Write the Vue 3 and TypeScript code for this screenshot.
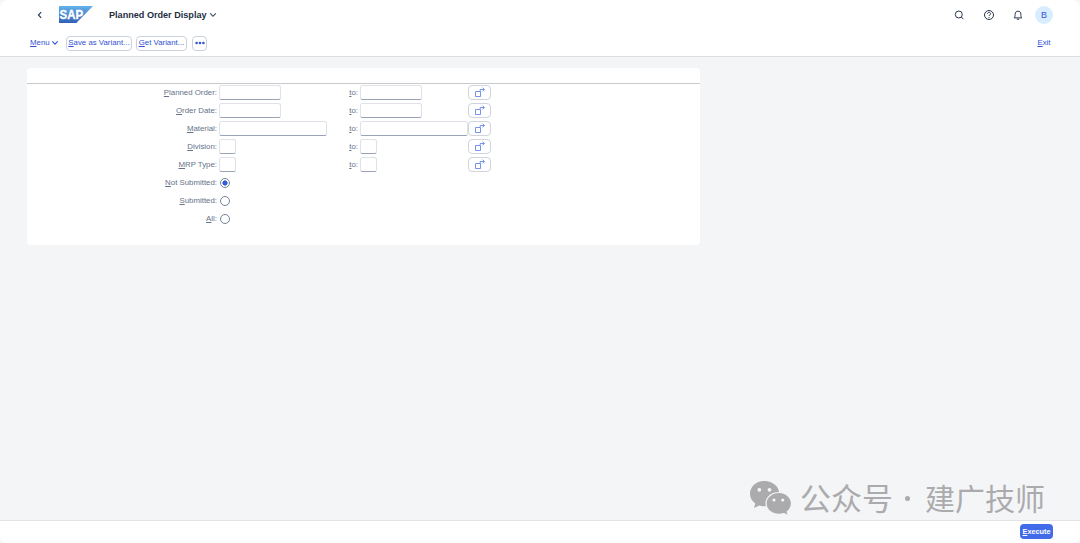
<script setup lang="ts">
interface RangeRow {
  label: string
  width: number
}

const rows: RangeRow[] = [
  { label: 'Planned Order:', width: 62 },
  { label: 'Order Date:', width: 62 },
  { label: 'Material:', width: 107.5 },
  { label: 'Division:', width: 17 },
  { label: 'MRP Type:', width: 17 },
]

const options = [
  { label: 'Not Submitted:', checked: true },
  { label: 'Submitted:', checked: false },
  { label: 'All:', checked: false },
]
</script>

<template>
  <div class="app">
    <header>
      <div class="shell">
        <svg class="back" viewBox="0 0 8 10"><path d="M5.2 2.1 2.4 5l2.8 2.9" /></svg>
        <svg class="logo" viewBox="0 0 34 17">
          <defs>
            <linearGradient id="logoFill" x1="0" y1="0" x2="0" y2="1">
              <stop offset="0" stop-color="#62b2ea" />
              <stop offset="1" stop-color="#3160b4" />
            </linearGradient>
          </defs>
          <path d="M0 0H34L17.3 17H0Z" fill="url(#logoFill)" />
          <text x="0.6" y="12.9" textLength="23.5" lengthAdjust="spacingAndGlyphs">SAP</text>
        </svg>
        <h1>Planned Order Display</h1>
        <svg class="chev title-chev" viewBox="0 0 8 6"><path d="m1.2 1.4 2.8 2.9 2.8-2.9" /></svg>
        <div class="tools">
          <svg viewBox="0 0 12 12"><circle cx="5.8" cy="5.5" r="3.5" /><path d="m8.3 8 2.1 2.2" /></svg>
          <svg viewBox="0 0 12 12">
            <circle cx="6" cy="6" r="4.5" />
            <path d="M4.5 4.8C4.5 2.8 7.6 2.8 7.6 4.8 7.6 5.9 6 5.9 6 7" /><path d="M6 8.1v1" />
          </svg>
          <svg viewBox="0 0 12 12">
            <path d="M2.2 8.9c1-1 .9-1.8.9-3.5 0-2 1.1-3.2 2.9-3.2s2.9 1.2 2.9 3.2c0 1.7-.1 2.5.9 3.5Z" /><path d="M4.8 10.2h2.4" />
          </svg>
          <span class="avatar">B</span>
        </div>
      </div>
      <div class="toolbar">
        <span class="menu"><u>M</u>enu</span>
        <svg class="chev menu-chev" viewBox="0 0 8 6"><path d="m1.3 1.3 2.7 2.8 2.7-2.8" /></svg>
        <button class="save"><span><u>S</u>ave as Variant...</span></button>
        <button class="get"><span><u>G</u>et Variant...</span></button>
        <button class="more"><svg viewBox="0 0 10 4"><circle cx="1.6" cy="2" r="1.3" /><circle cx="5" cy="2" r="1.3" /><circle cx="8.4" cy="2" r="1.3" /></svg></button>
        <span class="exit"><u>E</u>xit</span>
      </div>
    </header>

    <main>
      <section class="panel">
        <div class="panel-head"></div>
        <div class="form">
          <div v-for="row in rows" :key="row.label" class="row">
            <label><u>{{ row.label[0] }}</u>{{ row.label.slice(1) }}</label>
            <div class="cell"><span class="field" :style="{ width: row.width + 'px' }"></span></div>
            <label><u>t</u>o:</label>
            <div class="cell"><span class="field" :style="{ width: row.width + 'px' }"></span></div>
            <button class="multi">
              <svg viewBox="0 0 10 10"><path d="M.5 4.5h5v5h-5Z" /><path d="M5.2 4V2.500h4M7.500.6 9.400 2.500 7.500 4.400" /></svg>
            </button>
          </div>
          <div v-for="option in options" :key="option.label" class="row">
            <label><u>{{ option.label[0] }}</u>{{ option.label.slice(1) }}</label>
            <div class="cell"><span class="radio" :class="{ checked: option.checked }"></span></div>
          </div>
        </div>
      </section>
      <div class="watermark">
        <svg viewBox="0 0 44 36">
          <path d="M15.5 1C7.2 1 1 6.7 1 13.8c0 4.2 2 7.4 5.3 9.7L5 28l5.2-2.6c1.8.6 3.4.8 6.3.8C24.5 26.2 30.3 20.7 30.3 13.7 30.3 6.7 23.8 1 15.5 1Z" />
          <path class="front" d="M30 12.5c-7.3 0-13 4.8-13 11 0 6.1 5.6 10.9 13 10.9 1.8 0 3.5-.3 5-.8l4.5 2.1-1.3-4c2.7-2 4.3-4.8 4.3-8.2 0-6.2-5.6-11-12.5-11Z" />
          <g class="eyes"><circle cx="10.3" cy="9.8" r="1.9" /><circle cx="20.5" cy="9.8" r="1.9" /><circle cx="25" cy="20" r="1.6" /><circle cx="33.7" cy="20" r="1.6" /></g>
        </svg>
        <span class="account">公众号</span><span class="dot"></span><span class="name">建广技师</span>
      </div>
    </main>
    <footer><button class="execute"><span><u>E</u>xecute</span></button></footer>
  </div>
</template>

<style>
body {
  background: #f4f5f7;
}
</style>

<style scoped>
* {
  box-sizing: border-box;
}
.app {
  height: 543px;
  display: flex;
  flex-direction: column;
  background: #f4f5f7;
  font: 7.85px/10px "Liberation Sans", Arial, sans-serif;
  color: #65728a;
  overflow: hidden;
}
header {
  height: 57px;
  flex: none;
  background: #fff;
  border-bottom: 1px solid #dcdee1;
  border-radius: 8px 8px 0 0;
}
svg {
  fill: none;
  flex: none;
}
u {
  text-decoration-thickness: 0.7px;
  text-underline-offset: 1px;
}
button {
  font: inherit;
  padding: 0;
  flex: none;
  display: flex;
  align-items: center;
  justify-content: center;
  white-space: nowrap;
}
.shell {
  height: 30px;
  display: flex;
  align-items: center;
  padding: 0 27px 0 36px;
}
.back {
  width: 8px;
  height: 10px;
  stroke: #26384d;
  stroke-width: 1.1;
}
.logo {
  width: 34px;
  height: 17px;
  margin: -1px 0 0 15px;
}
.logo text {
  fill: #fff;
  stroke: #fff;
  stroke-width: 0.4px;
  font: bold 13.5px "Liberation Sans", Arial, sans-serif;
}
h1 {
  margin: 0 0 0 16px;
  color: #1d2d3e;
  font-size: 9.1px;
  line-height: 12px;
  white-space: nowrap;
}
.chev {
  width: 8px;
  height: 6px;
  stroke: #33465c;
  stroke-width: 1.1;
}
.title-chev {
  margin-left: 2.5px;
}
.tools {
  margin-left: auto;
  display: flex;
  align-items: center;
}
.tools svg {
  width: 12px;
  height: 12px;
  margin-right: 17.4px;
  stroke: #26374a;
  stroke-width: 1;
}
.tools svg:nth-child(3) {
  margin-right: 11px;
}
.avatar {
  width: 18px;
  height: 18px;
  border-radius: 50%;
  background: #d8edff;
  color: #3656d4;
  font-size: 9px;
  line-height: 18px;
  text-align: center;
}
.toolbar {
  height: 26px;
  display: flex;
  align-items: center;
  padding: 0 29.5px 0 30px;
  color: #3353d4;
}
.menu {
  width: 21px;
}
.menu-chev {
  stroke: #3353d4;
  margin-right: 7px;
}
.toolbar button {
  height: 15px;
  border: 1px solid #ccd2dc;
  border-radius: 4px;
  background: #fff;
  color: inherit;
}
.save {
  width: 66px;
}
.get {
  width: 51px;
  margin-left: 4px;
}
.more {
  width: 15px;
  margin-left: 5px;
}
.more svg {
  width: 10px;
  height: 4px;
  fill: #3353d4;
}
.exit {
  margin-left: auto;
}
main {
  flex: 1;
  min-height: 0;
  position: relative;
  padding: 11px 27px 0;
}
.panel {
  width: 672.5px;
  height: 176.5px;
  background: #fff;
  border-radius: 4px;
}
.panel-head {
  height: 16px;
  border-bottom: 1px solid #c9cacc;
}
.row {
  height: 18px;
  display: grid;
  grid-template-columns: 190px 107.5px 33.5px 107.5px 23px;
  align-items: center;
}
.row label {
  text-align: right;
  white-space: nowrap;
}
.cell {
  padding-left: 2px;
  height: 16px;
  display: flex;
  align-items: center;
}
.field {
  flex: none;
  height: 15px;
  margin-top: -2px;
  border: 1px solid #dfe2e9;
  border-bottom-color: #98a3b5;
  border-radius: 2.5px;
  background: #fff;
}
.multi {
  width: 23px;
  height: 15px;
  margin: -2px 0 0 2.5px;
  border: 1px solid #cfd4de;
  border-radius: 4px;
  background: #fff;
}
.multi svg {
  width: 10px;
  height: 10px;
  stroke: #5378e9;
  stroke-width: 0.8;
}
.radio {
  width: 10px;
  height: 10px;
  margin-left: 1px;
  border: 1px solid #758297;
  border-radius: 50%;
}
.radio.checked {
  background: radial-gradient(circle, #315ed8 2.3px, #fff 2.9px);
}
.watermark {
  position: absolute;
  left: 749px;
  top: 422px;
  height: 38px;
  display: flex;
  align-items: center;
  color: #ababad;
  font: 31px/38px "Noto Sans CJK SC", sans-serif;
  white-space: nowrap;
}
.watermark svg {
  width: 44px;
  height: 36px;
  fill: #ababad;
}
.front {
  stroke: #f4f5f7;
  stroke-width: 1.2;
}
.watermark .eyes {
  fill: #f4f5f7;
}
.account {
  width: 93px;
  margin: -3px 0 0 7px;
}
.dot {
  width: 5px;
  height: 5px;
  margin-left: 12px;
  border-radius: 50%;
  background: #ababad;
}
.name {
  margin: -3px 0 0 15px;
  font-size: 30px;
}
footer {
  height: 23px;
  flex: none;
  display: flex;
  justify-content: flex-end;
  padding: 3px 27px 0;
  background: #fff;
  border-top: 1px solid #e1e3e5;
  border-radius: 0 0 6px 6px;
}
.execute {
  width: 33px;
  height: 15px;
  border: 0;
  border-radius: 4px;
  background: #426bea;
  color: #fff;
  font-size: 7.3px;
  font-weight: bold;
}
</style>
